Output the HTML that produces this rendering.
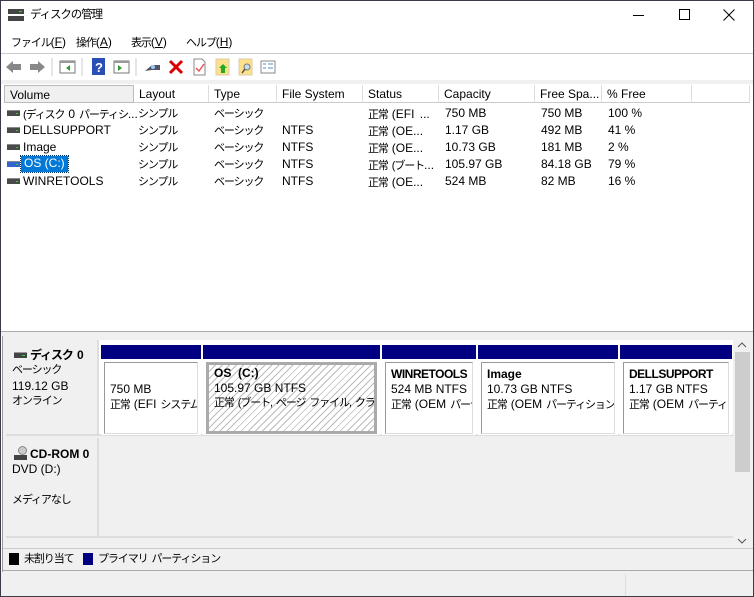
<!DOCTYPE html>
<html><head><meta charset="utf-8"><style>
*{margin:0;padding:0;box-sizing:border-box}
body{width:754px;height:597px;overflow:hidden;background:#fff;font-family:"Liberation Sans","Noto Sans CJK JP",sans-serif;font-size:12px;color:#000;position:relative}
.a{position:absolute}
.j{font-size:11px;letter-spacing:-1.1px;word-spacing:2px}
.n{letter-spacing:0;font-size:12px}
.win{left:0;top:0;width:754px;height:597px;border:1px solid #3a3a4a}
.t{white-space:nowrap;position:absolute;line-height:14px}
.hdr{position:absolute;top:85px;height:18px;background:#fff;border-right:1px solid #ddd;border-bottom:1px solid #ccc}
.hdr span{position:absolute;left:5px;top:2px}
.row{position:absolute;left:5px;height:17px;width:745px}
.row span{position:absolute;top:1px;white-space:nowrap;line-height:15px}
.row span.j{top:2px}
.row span.n{position:static}
.ic{position:absolute;left:2px;top:5px;width:13px;height:6px;background:#4a4a4a;border-top:1px solid #888}
.ic:after{content:"";position:absolute;right:2px;top:2px;width:2px;height:1px;background:#3c3}
.part{position:absolute;top:345px;height:90px;background:#fff}
.part .bar{position:absolute;left:0;right:0;top:0;height:14px;background:#000080}
.part .box{position:absolute;left:3px;right:3px;top:17px;height:72px;border:1px solid #999;border-right-color:#ddd;border-bottom-color:#ddd;background:#fff;overflow:hidden}
.box div{position:absolute;left:5px;white-space:nowrap;line-height:14px}
</style></head><body>
<div class="a win"></div>
<div class="a" style="left:8px;top:9px;width:16px;height:12px">
<div class="a" style="left:0;top:0;width:16px;height:5px;background:#444"></div>
<div class="a" style="left:11px;top:2px;width:3px;height:1px;background:#3c3"></div>
<div class="a" style="left:0;top:7px;width:16px;height:5px;background:#444"></div>
</div>
<div class="t j" style="left:30px;top:8px;font-size:11.5px">ディスクの管理</div>
<div class="a" style="left:633px;top:15px;width:11px;height:1px;background:#000"></div>
<div class="a" style="left:679px;top:9px;width:11px;height:11px;border:1px solid #000"></div>
<svg class="a" style="left:723px;top:9px" width="12" height="12"><path d="M0.5 0.5 L11.5 11.5 M11.5 0.5 L0.5 11.5" stroke="#000" stroke-width="1"/></svg>
<div class="t j" style="left:11px;top:35px">ファイル<span class="n">(<u>F</u>)</span></div>
<div class="t j" style="left:76px;top:35px">操作<span class="n">(<u>A</u>)</span></div>
<div class="t j" style="left:131px;top:35px">表示<span class="n">(<u>V</u>)</span></div>
<div class="t j" style="left:186px;top:35px">ヘルプ<span class="n">(<u>H</u>)</span></div>
<div class="a" style="left:1px;top:53px;width:752px;height:1px;background:#ccc"></div>
<svg class="a" style="left:0;top:54px" width="290" height="26">
<path d="M6 13 L13 7 V10 H21 V16 H13 V19 Z" fill="#888"/>
<path d="M45 13 L38 7 V10 H30 V16 H38 V19 Z" fill="#888"/>
<line x1="52" y1="4" x2="52" y2="22" stroke="#ccc"/>
<rect x="60" y="7" width="15" height="12" fill="#fff" stroke="#777"/><rect x="60" y="7" width="15" height="2" fill="#999"/><path d="M70 11 L66 14 L70 17Z" fill="#393"/>
<line x1="82" y1="4" x2="82" y2="22" stroke="#ccc"/>
<rect x="92" y="4" width="13" height="17" fill="#2a4fb5"/><text x="95" y="18" fill="#fff" font-size="13" font-weight="bold" font-family="Liberation Sans">?</text>
<rect x="114" y="7" width="15" height="12" fill="#fff" stroke="#777"/><rect x="114" y="7" width="15" height="2" fill="#999"/><path d="M118 11 L122 14 L118 17Z" fill="#393"/>
<line x1="136" y1="4" x2="136" y2="22" stroke="#ccc"/>
<path d="M145 17 L152 11 H160 V16 H152Z" fill="#556"/><circle cx="153" cy="13" r="2" fill="#9cf"/>
<path d="M170 7 L182 19 M182 7 L170 19" stroke="#d00" stroke-width="3"/>
<path d="M194 5 H202 L205 8 V21 H194Z" fill="#fff" stroke="#888"/><path d="M196 14 L199 17 L204 10" stroke="#e55" fill="none" stroke-width="1.5"/>
<rect x="216" y="5" width="13" height="16" fill="#fce08a" stroke="#dca"/><path d="M223 10 L227 14 H225 V19 H221 V14 H219Z" fill="#2a2"/>
<rect x="239" y="5" width="13" height="16" fill="#fce08a" stroke="#dca"/><circle cx="247" cy="13" r="3" fill="#cde" stroke="#777"/><line x1="245" y1="15" x2="242" y2="19" stroke="#555" stroke-width="1.5"/>
<rect x="261" y="7" width="14" height="12" fill="#fff" stroke="#888"/><path d="M263 10 h3 M263 14 h3 M268 10 h5 M268 14 h5" stroke="#58c"/>
</svg>
<div class="a" style="left:1px;top:80px;width:752px;height:4px;background:#f0f0f0"></div>
<div class="hdr" style="left:4px;width:130px;background:#f0f0f0;border:1px solid #bbb"><span>Volume</span></div>
<div class="hdr" style="left:134px;width:75px"><span>Layout</span></div>
<div class="hdr" style="left:209px;width:68px"><span>Type</span></div>
<div class="hdr" style="left:277px;width:86px"><span>File System</span></div>
<div class="hdr" style="left:363px;width:76px"><span>Status</span></div>
<div class="hdr" style="left:439px;width:96px"><span>Capacity</span></div>
<div class="hdr" style="left:535px;width:67px"><span>Free Spa...</span></div>
<div class="hdr" style="left:602px;width:90px"><span>% Free</span></div>
<div class="hdr" style="left:692px;width:58px"></div>
<div class="row" style="top:105px"><i class="ic"></i><span class="j" style="left:18px">(ディスク <span class="n">0</span> パーティシ<span class="n">...</span></span><span class="j" style="left:133px">シンプル</span><span class="j" style="left:209px">ベーシック</span><span class="j" style="left:363px">正常 <span class="n">(EFI ...</span></span><span style="left:440px">750 MB</span><span style="left:536px">750 MB</span><span style="left:603px">100 %</span></div>
<div class="row" style="top:122px"><i class="ic"></i><span style="left:18px">DELLSUPPORT</span><span class="j" style="left:133px">シンプル</span><span class="j" style="left:209px">ベーシック</span><span style="left:277px">NTFS</span><span class="j" style="left:363px">正常 <span class="n">(OE...</span></span><span style="left:440px">1.17 GB</span><span style="left:536px">492 MB</span><span style="left:603px">41 %</span></div>
<div class="row" style="top:139px"><i class="ic"></i><span style="left:18px">Image</span><span class="j" style="left:133px">シンプル</span><span class="j" style="left:209px">ベーシック</span><span style="left:277px">NTFS</span><span class="j" style="left:363px">正常 <span class="n">(OE...</span></span><span style="left:440px">10.73 GB</span><span style="left:536px">181 MB</span><span style="left:603px">2 %</span></div>
<div class="row" style="top:156px"><i class="ic" style="background:#36c"></i><span style="left:16px;top:0;background:#0078d7;color:#fff;padding:0 3px;height:16px;outline:1px dotted #036">OS (C:)</span><span class="j" style="left:133px">シンプル</span><span class="j" style="left:209px">ベーシック</span><span style="left:277px">NTFS</span><span class="j" style="left:363px">正常 (ブート<span class="n">...</span></span><span style="left:440px">105.97 GB</span><span style="left:536px">84.18 GB</span><span style="left:603px">79 %</span></div>
<div class="row" style="top:173px"><i class="ic"></i><span style="left:18px">WINRETOOLS</span><span class="j" style="left:133px">シンプル</span><span class="j" style="left:209px">ベーシック</span><span style="left:277px">NTFS</span><span class="j" style="left:363px">正常 <span class="n">(OE...</span></span><span style="left:440px">524 MB</span><span style="left:536px">82 MB</span><span style="left:603px">16 %</span></div>
<div class="a" style="left:1px;top:331px;width:752px;height:5px;background:#f0f0f0;border-top:1px solid #aaa"></div>
<div class="a" style="left:2px;top:336px;width:751px;height:236px;background:#f0f0f0;border-left:1px solid #999"></div>
<div class="a" style="left:6px;top:340px;width:93px;height:96px;background:#f0f0f0;border-right:2px solid #ddd;border-bottom:2px solid #ddd"></div>
<div class="a" style="left:99px;top:340px;width:634px;height:96px;background:#fff;border-bottom:2px solid #ddd"></div>
<div class="a" style="left:14px;top:352px;width:13px;height:6px;background:#444;border-top:1px solid #999"></div>
<div class="a" style="left:22px;top:355px;width:3px;height:1px;background:#3c3"></div>
<div class="t j" style="left:30px;top:348px;font-weight:bold;font-size:12px">ディスク <span class="n">0</span></div>
<div class="t j" style="left:12px;top:363px">ベーシック</div>
<div class="t" style="left:12px;top:379px">119.12 GB</div>
<div class="t j" style="left:12px;top:394px">オンライン</div>
<div class="part" style="left:101px;width:100px"><div class="bar"></div><div class="box"><div style="top:19px">750 MB</div><div class="j" style="top:34px">正常 <span class="n">(EFI</span> システム</div></div></div>
<div class="part" style="left:203px;width:177px"><div class="bar"></div><div class="box" style="border:3px solid #aaa;background:repeating-linear-gradient(135deg,#fff 0 4px,#bbb 4px 5px)"><div style="top:1px;font-weight:bold">OS&nbsp; (C:)</div><div style="top:16px">105.97 GB NTFS</div><div class="j" style="top:31px">正常 (ブート, ページ ファイル, クラッシ</div></div></div>
<div class="part" style="left:382px;width:94px"><div class="bar"></div><div class="box"><div style="top:4px;font-weight:bold;letter-spacing:-0.5px">WINRETOOLS</div><div style="top:19px">524 MB NTFS</div><div class="j" style="top:34px">正常 <span class="n">(OEM</span> パーテ</div></div></div>
<div class="part" style="left:478px;width:140px"><div class="bar"></div><div class="box"><div style="top:4px;font-weight:bold">Image</div><div style="top:19px">10.73 GB NTFS</div><div class="j" style="top:34px">正常 <span class="n">(OEM</span> パーティション)</div></div></div>
<div class="part" style="left:620px;width:112px"><div class="bar"></div><div class="box"><div style="top:4px;font-weight:bold;letter-spacing:-0.5px">DELLSUPPORT</div><div style="top:19px">1.17 GB NTFS</div><div class="j" style="top:34px">正常 <span class="n">(OEM</span> パーティ</div></div></div>
<div class="a" style="left:6px;top:438px;width:93px;height:100px;border-right:2px solid #ddd;border-bottom:2px solid #ddd"></div>
<div class="a" style="left:99px;top:438px;width:634px;height:100px;border-bottom:2px solid #ddd"></div>
<div class="a" style="left:18px;top:446px;width:9px;height:9px;border-radius:50%;background:#ccc;border:1px solid #888"></div>
<div class="a" style="left:14px;top:455px;width:13px;height:5px;background:#444"></div>
<div class="t" style="left:30px;top:447px;font-weight:bold">CD-ROM 0</div>
<div class="t" style="left:12px;top:462px">DVD (D:)</div>
<div class="t j" style="left:12px;top:493px">メディアなし</div>
<div class="a" style="left:734px;top:338px;width:17px;height:210px;background:#f0f0f0"></div>
<div class="a" style="left:735px;top:352px;width:15px;height:120px;background:#cdcdcd"></div>
<svg class="a" style="left:737px;top:341px" width="10" height="8"><path d="M1 6 L5 2 L9 6" stroke="#555" fill="none"/></svg>
<svg class="a" style="left:737px;top:537px" width="10" height="8"><path d="M1 2 L5 6 L9 2" stroke="#555" fill="none"/></svg>
<div class="a" style="left:3px;top:548px;width:750px;height:1px;background:#ccc"></div>
<div class="a" style="left:9px;top:553px;width:10px;height:12px;background:#000"></div>
<div class="t j" style="left:24px;top:552px">未割り当て</div>
<div class="a" style="left:83px;top:553px;width:10px;height:12px;background:#000080"></div>
<div class="t j" style="left:98px;top:552px">プライマリ パーティション</div>
<div class="a" style="left:3px;top:570px;width:750px;height:1px;background:#aaa"></div>
<div class="a" style="left:1px;top:572px;width:752px;height:24px;background:#f0f0f0"></div>
<div class="a" style="left:625px;top:574px;width:1px;height:22px;background:#ddd"></div>
</body></html>
